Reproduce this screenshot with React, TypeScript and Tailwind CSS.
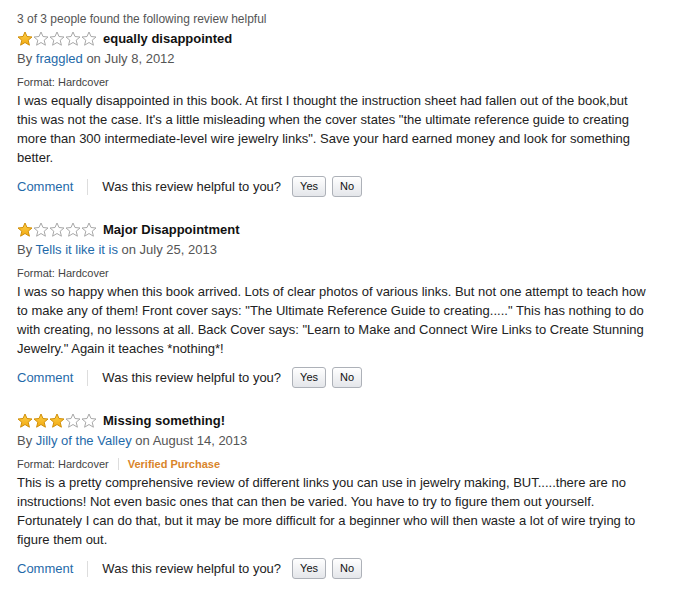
const reviews = [
  {
    stars: 1,
    title: "equally disappointed",
    author: "fraggled",
    date: "July 8, 2012",
    verified: false,
    lines: [
      "I was equally disappointed in this book. At first I thought the instruction sheet had fallen out of the book,but",
      "this was not the case. It's a little misleading when the cover states \"the ultimate reference guide to creating",
      "more than 300 intermediate-level wire jewelry links\". Save your hard earned money and look for something",
      "better.",
    ],
  },
  {
    stars: 1,
    title: "Major Disappointment",
    author: "Tells it like it is",
    date: "July 25, 2013",
    verified: false,
    lines: [
      "I was so happy when this book arrived. Lots of clear photos of various links. But not one attempt to teach how",
      "to make any of them! Front cover says: \"The Ultimate Reference Guide to creating.....\" This has nothing to do",
      "with creating, no lessons at all. Back Cover says: \"Learn to Make and Connect Wire Links to Create Stunning",
      "Jewelry.\" Again it teaches *nothing*!",
    ],
  },
  {
    stars: 3,
    title: "Missing something!",
    author: "Jilly of the Valley",
    date: "August 14, 2013",
    verified: true,
    lines: [
      "This is a pretty comprehensive review of different links you can use in jewelry making, BUT.....there are no",
      "instructions! Not even basic ones that can then be varied. You have to try to figure them out yourself.",
      "Fortunately I can do that, but it may be more difficult for a beginner who will then waste a lot of wire trying to",
      "figure them out.",
    ],
  },
]

const Star = ({ filled }: { filled: boolean }) => (
  <svg width="16" height="16" viewBox="0 0 16 16">
    <defs>
      <linearGradient id="gold" x1="0" y1="0" x2="0" y2="1">
        <stop offset="0" stopColor="#fdd04a" />
        <stop offset="1" stopColor="#f2a90f" />
      </linearGradient>
    </defs>
    <path
      d="M8 1 L10 5.5 L15 6 L11.2 9.2 L12.4 14.2 L8 11.5 L3.6 14.2 L4.8 9.2 L1 6 L6 5.5 Z"
      fill={filled ? "url(#gold)" : "#ffffff"}
      stroke={filled ? "#d08f0a" : "#a8a8a8"}
      strokeWidth="1"
      strokeLinejoin="round"
    />
  </svg>
)

const VoteButton = ({ label }: { label: string }) => (
  <button className="h-[21px] px-[7px] rounded-[3px] border border-[#adb1b8] bg-gradient-to-b from-white to-[#e4e6ea] text-[11px] text-[#111] leading-none">
    {label}
  </button>
)

const App = () => {
  return (
    <div className="w-[677px] h-[589px] bg-white pl-[17px] pt-[11px] text-[#333] font-['Liberation_Sans',Arial,sans-serif]">
      <div className="text-[12px] leading-[16px] text-[#555] mb-[2px]">3 of 3 people found the following review helpful</div>
      <div className="flex flex-col gap-[23px]">
        {reviews.map((r, i) => (
          <div key={i}>
            <div className="flex items-center h-[20px]">
              <div className="flex">
                {[0, 1, 2, 3, 4].map((s) => (
                  <Star key={s} filled={s < r.stars} />
                ))}
              </div>
              <span className="ml-[6px] text-[13px] font-bold text-[#111]">{r.title}</span>
            </div>
            <div className="text-[13px] leading-[20px] text-[#555]">
              By <span className="text-[#1f6aa9]">{r.author}</span> on {r.date}
            </div>
            <div className="flex items-center mt-[6px] text-[11px] leading-[14px] text-[#444]">
              <span>Format: Hardcover</span>
              {r.verified && (
                <>
                  <span className="mx-[9px] h-[12px] w-px bg-[#ddd]" />
                  <span className="font-bold text-[#d9852b]">Verified Purchase</span>
                </>
              )}
            </div>
            <div className="mt-[2px] text-[13px] leading-[19px] text-[#222]">
              {r.lines.map((l, j) => (
                <div key={j} className="whitespace-nowrap">{l}</div>
              ))}
            </div>
            <div className="flex items-center mt-[9px] text-[13px]">
              <span className="text-[#1f6aa9]">Comment</span>
              <span className="mx-[14px] h-[16px] w-px bg-[#ddd]" />
              <span className="text-[#222]">Was this review helpful to you?</span>
              <div className="ml-[11px] flex gap-[6px]">
                <VoteButton label="Yes" />
                <VoteButton label="No" />
              </div>
            </div>
          </div>
        ))}
      </div>
    </div>
  )
}

export default App
